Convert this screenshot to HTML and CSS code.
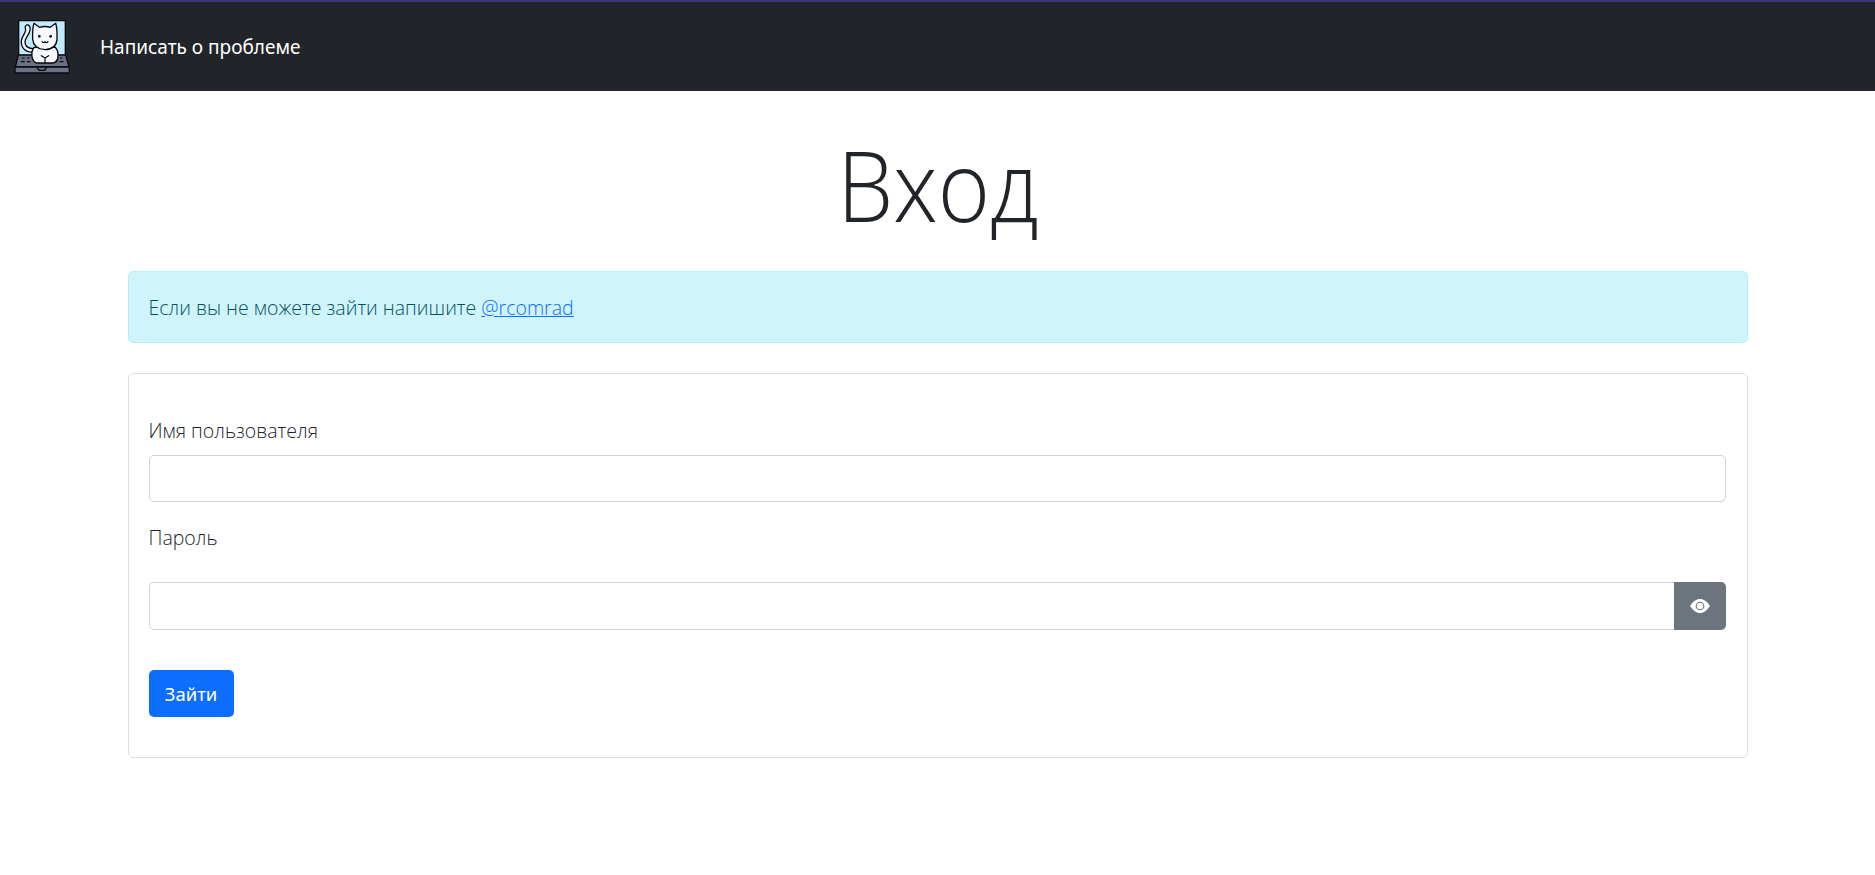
FILE: index.html
```html
<!DOCTYPE html>
<html lang="ru">
<head>
<meta charset="utf-8">
<title>Вход</title>
<link rel="stylesheet" href="styles.css">
</head>
<body>
<nav class="navbar">
  <a class="brand" href="#" aria-label="Главная">
    <svg class="logo" viewBox="42 57 168 168" fill="none" stroke="#07090e" stroke-width="4" stroke-linejoin="round" stroke-linecap="round">
      <rect x="56" y="62" width="140" height="104" rx="2" fill="#bfeaff"/>
      <path d="M55 165H197L207 201H46Z" fill="#6b7085"/>
      <path d="M45 201H208V215Q208 219 204 219H49Q45 219 45 215Z" fill="#6b7085"/>
      <path d="M112 202L117 211H134L139 202"/>
      <path d="M67 174H73M82 174H88M64 185H73M82 185H90M166 174H171M181 174H186M166 185H171M180 185H189" stroke-width="3.5"/>
      <path d="M101 157C80 159 62 146 64 122C66 107 77 101 77 89C76 84 74 82 77 78C81 72 88 74 90 82C94 101 75 110 75 125C75 140 87 147 103 146Z" fill="#f8f9ff"/>
      <path d="M103 142C92 153 92 185 111 189H160C179 184 177 153 165 141Z" fill="#f8f9ff"/>
      <path d="M102 70L118 82Q135 77 151 82L167 70Q172 85 171 118Q169 147 135 149Q101 147 98 118Q97 84 102 70Z" fill="#f8f9ff"/>
      <path d="M126 124Q127 128 131 128Q135 128 135 124Q136 128 140 128Q144 127 144 124M124 167L135 174L146 167M135 174V188" stroke-width="3.5"/>
      <circle cx="118" cy="109" r="4" fill="#07090e" stroke="none"/>
      <circle cx="152" cy="109" r="4" fill="#07090e" stroke="none"/>
    </svg>
  </a>
  <a class="nav-link" href="#">Написать о проблеме</a>
</nav>
<main class="container">
  <h1 class="title">Вход</h1>
  <div class="alert">Если вы не можете зайти напишите <a class="alert-link" href="#">@rcomrad</a></div>
  <form class="card">
    <label class="label" for="user">Имя пользователя</label>
    <input class="control" id="user" type="text">
    <label class="label label-second" for="pass">Пароль</label>
    <div class="group">
      <input class="control group-control" id="pass" type="password">
      <button class="toggle" type="button" aria-label="Показать пароль">
        <svg class="eye" viewBox="0 0 20 14"><path d="M0 7C4 1.500 7 0 10 0s6 1.500 10 7c-4 5.500-7 7-10 7S4 12.500 0 7Z" fill="#fff"/><circle cx="10" cy="7" r="3.800" fill="#fff" stroke="#6c757d" stroke-width="1.100"/></svg>
      </button>
    </div>
    <button class="submit" type="button">Зайти</button>
  </form>
</main>
</body>
</html>
```
FILE: styles.css
```css
* { box-sizing: border-box; }
body {
  margin: 0;
  background: #fff;
  color: #212529;
  font: 350 19.5px/30px "Open Sans", "Noto Sans", sans-serif;
}
.navbar {
  display: flex;
  align-items: center;
  gap: 30px;
  height: 91px;
  padding: 1px 14px 0;
  background: #212529;
  border-top: 2px solid #38357a;
}
.brand, .logo { display: block; width: 56px; height: 56px; }
.nav-link {
  color: #fff;
  font-family: "Noto Sans", sans-serif;
  font-weight: 400;
  font-size: 19px;
  text-decoration: none;
}
.container { width: 1620px; margin: 0 auto; }
.title {
  margin: 0;
  padding-top: 33px;
  height: 180px;
  font-size: 98px;
  font-weight: 300;
  line-height: 120px;
  text-align: center;
  transform: scaleX(0.91);
}
.alert {
  height: 72px;
  padding: 21px 20px;
  background: #cff4fc;
  border: 1px solid #b6effb;
  border-radius: 5px;
  color: #055160;
}
.alert-link { color: #0d6efd; }
.card {
  height: 385px;
  margin-top: 30px;
  padding: 42px 21px 0 20px;
  border: 1px solid #dfdfdf;
  border-radius: 5px;
}
.label { display: block; height: 39px; }
.label-second { margin-top: 21px; height: 59px; }
.control {
  display: block;
  width: 100%;
  height: 47px;
  border: 1px solid #ced4da;
  border-radius: 5px;
  background: #fff;
  outline: none;
}
.group { display: flex; height: 48px; }
.group-control { flex: 1; height: 48px; border-right: 0; border-radius: 5px 0 0 5px; }
.toggle {
  display: flex;
  align-items: center;
  justify-content: center;
  width: 52px;
  padding: 0;
  border: 0;
  border-radius: 0 5px 5px 0;
  background: #6c757d;
}
.eye { width: 20px; height: 14px; }
.submit {
  display: block;
  width: 85px;
  height: 47px;
  margin-top: 40px;
  padding: 1px 0 0;
  border: 0;
  border-radius: 5px;
  background: #0d6efd;
  color: #fff;
  font: 400 18.5px/46px "Noto Sans", sans-serif;
}
```
